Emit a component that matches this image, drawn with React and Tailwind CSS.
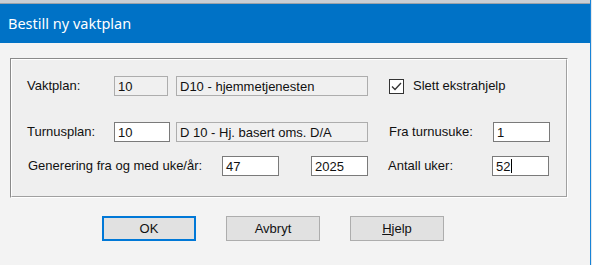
import React from "react";

// Read-only field (grey background, light border)
const ReadOnlyBox = ({ value, className = "" }) => (
  <div
    className={`h-[20px] border border-[#adadad] bg-[#f0f0f0] px-[3px] flex items-center leading-none ${className}`}
  >
    {value}
  </div>
);

// Editable text field
const InputBox = ({ value, caret = false, className = "" }) => (
  <div
    className={`h-[20px] border border-[#7a7a7a] bg-white px-[3px] flex items-center leading-none ${className}`}
  >
    <span>{value}</span>
    {caret && <span className="ml-px h-[14px] w-px bg-black" />}
  </div>
);

const Button = ({ children, focused = false }) => (
  <button
    className={`h-[25px] w-[94px] bg-[#e1e1e1] flex items-center justify-center ${
      focused ? "border-2 border-[#0078d7]" : "border border-[#adadad]"
    }`}
  >
    {children}
  </button>
);

export default function App() {
  return (
    <div className="w-[592px] h-[265px] bg-[#f0f0f0] overflow-hidden flex" style={{ fontFamily: '"Liberation Sans", Arial, sans-serif' }}>
      <div className="w-[591px] h-full flex flex-col border-r border-[#1883d7] bg-[#f3f3f3]">
        {/* strip of whatever is behind the dialog */}
        <div className="h-[3px] bg-[#c9ced4]" />
        <div className="h-px bg-[#9ba2aa]" />

        {/* title bar */}
        <div className="h-[39px] bg-[#0072c6] flex items-center pl-[8px] pt-[1px]">
          <span className="text-white text-[14.5px]" style={{ fontFamily: '"Noto Sans", "Open Sans", sans-serif' }}>
            Bestill ny vaktplan
          </span>
        </div>

        {/* body */}
        <div className="flex-1 flex flex-col text-[13px] text-[#111]">
          <div className="ml-[10px] mt-[15px] w-[558px] h-[140px] border border-[#8a8a8a] border-r-white border-b-white">
            <div className="h-full w-full border border-white border-r-[#a0a0a0] border-b-[#a0a0a0] bg-[#efefef] pl-[15px] pt-[16px]">
              {/* row 1 */}
              <div className="flex items-center h-[20px]">
                <span className="w-[87px]">Vaktplan:</span>
                <ReadOnlyBox value="10" className="w-[54px]" />
                <ReadOnlyBox value="D10 - hjemmetjenesten" className="ml-[8px] w-[192px]" />
                <div className="ml-[21px] flex items-center">
                  <span className="w-[15px] h-[15px] border border-[#333] bg-white flex items-center justify-center">
                    <svg width="11" height="9" viewBox="0 0 11 9">
                      <path d="M1 4.5 L4 7.5 L10 1" fill="none" stroke="#333" strokeWidth="1.3" />
                    </svg>
                  </span>
                  <span className="ml-[9px]">Slett ekstrahjelp</span>
                </div>
              </div>

              {/* row 2 */}
              <div className="flex items-center h-[20px] mt-[26px]">
                <span className="w-[87px]">Turnusplan:</span>
                <InputBox value="10" className="w-[56px]" />
                <ReadOnlyBox value="D 10 - Hj. basert oms. D/A" className="ml-[6px] w-[192px]" />
                <span className="ml-[21px] w-[104px]">Fra turnusuke:</span>
                <InputBox value="1" className="w-[57px]" />
              </div>

              {/* row 3 */}
              <div className="flex items-center h-[20px] mt-[14px]">
                <span className="w-[195px] pl-px">Generering fra og med uke/år:</span>
                <InputBox value="47" className="w-[57px]" />
                <InputBox value="2025" className="ml-[32px] w-[57px]" />
                <span className="ml-[20px] w-[104px]">Antall uker:</span>
                <InputBox value="52" caret className="w-[57px]" />
              </div>
            </div>
          </div>

          {/* buttons */}
          <div className="flex items-center mt-[18px] pl-[102px] gap-[30px]">
            <Button focused>OK</Button>
            <Button>Avbryt</Button>
            <Button>
              <span>
                <span className="underline">H</span>jelp
              </span>
            </Button>
          </div>
        </div>
      </div>
      <div className="flex-1 bg-[#e8e8e8]" />
    </div>
  );
}
